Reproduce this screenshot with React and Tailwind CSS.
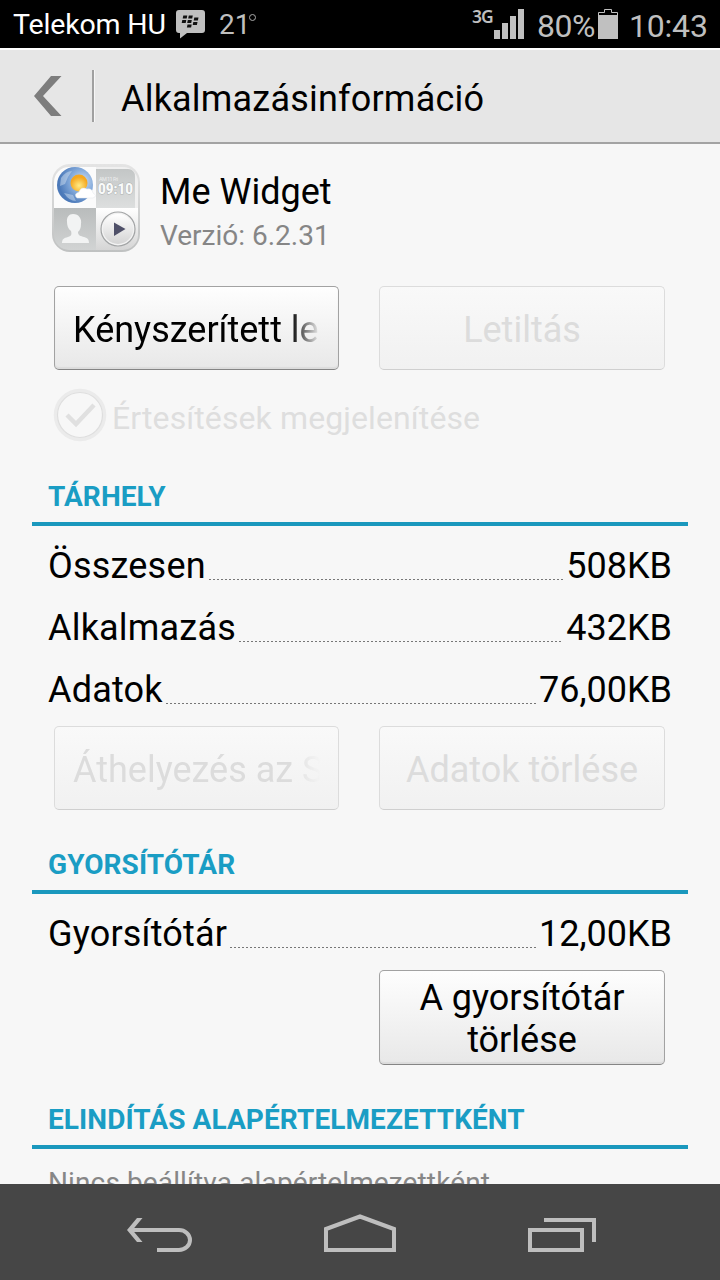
import clsx from "clsx";

const StatusBar = () => (
    <div className="h-12 shrink-0 bg-black flex items-center text-[#bfbfbf] whitespace-nowrap">
        <span className="ml-[13px] w-[163px] text-[28.500px] leading-none tracking-[-0.15px] text-white pt-[3px]">Telekom HU</span>
        <svg className="w-[29px] h-[29px] mt-px" viewBox="0 0 29 29">
            <path d="M3 0h23q3 0 3 3v17q0 3-3 3H11l-7 5.500V23H3q-3 0-3-3V3q0-3 3-3z" fill="#c0c0c0" />
            <g fill="#111">
                <path d="M7.300 5.500h4l-.6 3h-4zM12.800 5.500h4l-.6 3h-4zM6.300 10h4l-.6 3h-4zM11.800 10h4l-.6 3h-4zM18.300 7.500h4.200l-.6 3h-4.200zM17.300 12h4.200l-.6 3h-4.200zM11.500 14.500h4.200l-.6 3h-4.200z" />
            </g>
        </svg>
        <span className="ml-[14px] pt-[2px] text-[28px] leading-none">21</span>
        <span className="w-[7px] h-[7px] -ml-px mb-[13px] rounded-full border border-[#aaa]" />
        <span className="ml-auto mb-[15px] w-[20px] text-[17.500px] leading-none font-semibold tracking-[-1px] font-['Noto_Sans']">3G</span>
        <svg className="w-[30px] h-[30px] ml-[2px]" viewBox="0 0 30 30" fill="#c0c0c0">
            <path d="M0 21h6v9H0zM8 14h6v16H8zM16 7h6v23h-6zM24 0h6v30h-6z" />
        </svg>
        <span className="ml-[13px] w-[61px] text-[32px] leading-none pt-[3px] tracking-[-0.5px]">80%</span>
        <svg className="w-5 h-[30px]" viewBox="0 0 20 30">
            <path d="M.5 29V3.500h6v-3h7v3h6V29" fill="none" stroke="#c0c0c0" />
            <path d="M0 6h20v24H0z" fill="#c0c0c0" />
        </svg>
        <span className="ml-[11px] w-[91px] text-[32px] leading-none pt-[3px] tracking-[-0.2px]">10:43</span>
    </div>
);

const Header = () => (
    <div className="h-24 shrink-0 flex items-center bg-[#e6e6e6] border-t-2 border-t-white border-b-2 border-b-[#a3a3a3]">
        <svg className="ml-[34px] w-7 h-10" viewBox="0 0 28 40">
            <path d="M17 0h10.500L9 20l18.500 20H17L0 20z" fill="#7d7d7d" />
        </svg>
        <div className="ml-[30px] w-[3px] h-[52px] bg-[#a0a0a0] border-r border-[#f6f6f6]" />
        <h1 className="ml-[26px] pt-[5px] text-[36px] leading-[42px] tracking-[0.2px]">Alkalmazásinformáció</h1>
    </div>
);

const WidgetIcon = () => (
    <svg className="w-[90px] h-[90px]" viewBox="0 0 90 90">
        <defs>
            <clipPath id="tile"><rect x="3" y="3" width="84" height="83" rx="15" /></clipPath>
            <linearGradient id="grayTile" x2="0" y2="1"><stop stopColor="#c3c6c6" /><stop offset="1" stopColor="#dddfdf" /></linearGradient>
            <linearGradient id="person" x2="0" y2="1"><stop stopColor="#b9bcbc" /><stop offset="1" stopColor="#d2d4d4" /></linearGradient>
            <linearGradient id="lightTile" x2="0" y2="1"><stop stopColor="#fff" /><stop offset="1" stopColor="#d4d4d4" /></linearGradient>
            <linearGradient id="rim" x2="0" y2="1"><stop stopColor="#e4e4e4" /><stop offset="1" stopColor="#bfc1c1" /></linearGradient>
            <radialGradient id="globe" cx=".7" cy=".4" r=".65"><stop stopColor="#cfe0f4" /><stop offset=".5" stopColor="#86acdc" /><stop offset="1" stopColor="#4b79b9" /></radialGradient>
            <radialGradient id="sun" cy=".65"><stop stopColor="#ffec87" /><stop offset="1" stopColor="#f5a820" /></radialGradient>
        </defs>
        <rect x="1" y="0" width="88" height="88" rx="18" fill="url(#rim)" />
        <g clipPath="url(#tile)">
            <path d="M2 2h43v42H2z" fill="#fbfbfb" />
            <path d="M45 2h43v42H45z" fill="#f0f0f0" />
            <path d="M45 5h32q7 0 7 8v31H45z" fill="url(#grayTile)" />
            <path d="M2 44h43v43H2z" fill="url(#person)" />
            <path d="M45 44h43v43H45z" fill="url(#lightTile)" />
            <circle cx="24" cy="21" r="18" fill="url(#globe)" />
            <path d="M10 14q5-7 11-7l-4 6-3 7-5 2zM13 29l9 2 3 6q-7 0-12-8z" fill="#d9e6f4" opacity=".45" />
            <circle cx="28" cy="19" r="8.500" fill="url(#sun)" />
            <path d="M26 34q-4-4 2-6 2-6 8-3 5-1 6 4 5 3 0 5z" fill="#fff" stroke="#e2e6ea" strokeWidth=".5" />
            <text x="47" y="29.500" fontSize="14" fontWeight="900" textLength="35" lengthAdjust="spacingAndGlyphs" fill="#f8f9f9" stroke="#adb1b1" strokeWidth="1" paintOrder="stroke">09:10</text>
            <text x="48" y="16.500" fontSize="5.500" textLength="19" fill="#eceded">AM 11 Fri</text>
            <path d="M22 50c6 0 9 5 8 10 0 4-1 6-3 8 0 4 3 4 6 5 4 1 5 3 5 6H11c0-4 2-5 6-6 3-1 4-2 3-6-3-2-4-6-4-9-.5-5 2-8 6-8z" fill="#f2f3f3" />
            <circle cx="67" cy="65" r="17" fill="#f2f2f2" stroke="#a2a4a5" strokeWidth="1.200" />
            <circle cx="67" cy="65" r="15" fill="url(#lightTile)" />
            <path d="M63 58.500v13.500l11.500-7z" fill="#4f5068" />
        </g>
    </svg>
);

const Button = ({ children, disabled, fade, className }) => (
    <button
        disabled={disabled}
        className={clsx(
            "rounded-[5px] border bg-linear-to-b pt-[3px] text-[36px] leading-[42px]",
            disabled
                ? "border-[#dcdcdc] border-b-[#cfcfcf] from-[#f9f9f9] to-[#f1f1f1] text-[#dcdcdc]"
                : "border-[#a2a2a2] border-b-[#858585] from-[#fefefe] to-[#e8e8e8] text-black shadow-[inset_0_-2px_1px_#dcdcdc]",
            fade ? "w-[285px] px-[18px]" : "w-[286px] text-center",
            className
        )}
    >
        {fade ? (
            <span className="block overflow-hidden whitespace-nowrap text-left mask-r-from-[88%] mask-r-to-100%">{children}</span>
        ) : children}
    </button>
);

const SectionTitle = ({ children, className }) => (
    <h2 className={clsx("mx-8 h-[55px] pl-4 border-b-4 border-[#1a98bd] text-[28px] leading-[51px] font-bold tracking-[0.08px] text-[#1a9dc4]", className)}>
        {children}
    </h2>
);

const Row = ({ label, value }) => (
    <div className="h-[62px] px-12 flex items-center text-[36px] leading-[42px]">
        <span className="tracking-[0.2px]">{label}</span>
        <span className="flex-1 self-end h-px mb-[17px] ml-[3px] mr-[3px] bg-[repeating-linear-gradient(90deg,#777_0_2px,transparent_2px_4px)]" />
        <span>{value}</span>
    </div>
);

const NavBar = () => (
    <div className="h-24 shrink-0 bg-[#464646] flex">
        <svg className="w-full h-24" viewBox="0 0 720 96" fill="none" stroke="#bebebe" strokeWidth="4">
            <path d="M131 46h48a11 10 0 0 1 0 20h-22" />
            <path d="M137 34h5.500L132.500 46l10 12H137L127 46z" fill="#bebebe" stroke="none" />
            <path d="M326 66V45l34-12.500L394 45v21z" />
            <path d="M530 46h52v20h-52zM544 36h50v22" />
        </svg>
    </div>
);

export default function App() {
    return (
        <div className="w-[720px] h-[1280px] overflow-hidden flex flex-col bg-[#f7f7f7] font-[Roboto,sans-serif] text-black">
            <StatusBar />
            <Header />

            <div className="flex-1 min-h-0 overflow-hidden">
                <div className="flex pt-5 pl-[51px] h-[142px]">
                    <WidgetIcon />
                    <div className="ml-[19px] pt-[7px]">
                        <div className="text-[36px] leading-[42px]">Me Widget</div>
                        <div className="mt-[6px] text-[28px] leading-[34px] text-[#868686]">Verzió: 6.2.31</div>
                    </div>
                </div>

                <div className="flex gap-10 pl-[54px]">
                    <Button fade className="h-[84px]">Kényszerített leáll</Button>
                    <Button disabled className="h-[84px]">Letiltás</Button>
                </div>

                <div className="flex items-center h-[90px] pl-[53px] text-[#dedede]">
                    <svg className="w-[54px] h-[54px]" viewBox="0 0 54 54" fill="none">
                        <circle cx="27" cy="27" r="24.500" stroke="#ebebeb" strokeWidth="3.500" />
                        <circle cx="27" cy="27" r="22.500" stroke="#dedede" strokeWidth="1.200" />
                        <path d="M14 27l9 9 18-19" stroke="#e0e0e0" strokeWidth="4.500" />
                    </svg>
                    <span className="ml-[5px] pt-[6px] text-[32px] leading-[38px] tracking-[0.1px]">Értesítések megjelenítése</span>
                </div>

                <SectionTitle className="mt-[11px]">TÁRHELY</SectionTitle>
                <div className="pt-[9px]">
                    <Row label="Összesen" value="508KB" />
                    <Row label="Alkalmazás" value="432KB" />
                    <Row label="Adatok" value="76,00KB" />
                </div>
                <div className="flex gap-10 pl-[54px] pt-[5px]">
                    <Button disabled fade className="h-[84px]">Áthelyezés az SD</Button>
                    <Button disabled className="h-[84px]">Adatok törlése</Button>
                </div>

                <SectionTitle className="mt-[29px]">GYORSÍTÓTÁR</SectionTitle>
                <div className="pt-[9px]">
                    <Row label="Gyorsítótár" value="12,00KB" />
                </div>
                <div className="flex justify-end pt-[5px] pr-[55px]">
                    <Button className="h-[95px] px-5">A gyorsítótár törlése</Button>
                </div>

                <SectionTitle className="mt-[29px]">ELINDÍTÁS ALAPÉRTELMEZETTKÉNT</SectionTitle>
                <p className="pl-12 pt-[17px] text-[28px] leading-[34px] tracking-[0.12px] text-[#868686]">Nincs beállítva alapértelmezettként.</p>
            </div>

            <NavBar />
        </div>
    );
}
